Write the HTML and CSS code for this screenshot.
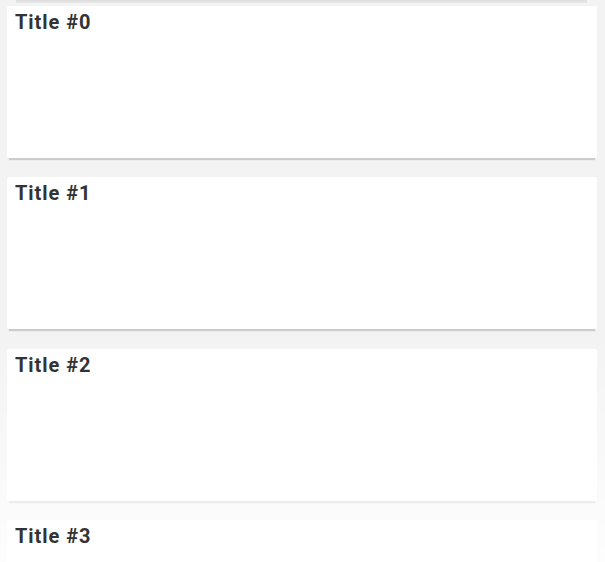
FILE: index.html
```html
<!DOCTYPE html>
<html>
<head>
<meta charset="utf-8">
<link rel="stylesheet" href="styles.css">
</head>
<body>
<div class="list">
  <div class="prev-shadow"></div>
  <div class="card"><div class="title">Title #0</div></div>
  <div class="card"><div class="title">Title #1</div></div>
  <div class="card"><div class="title">Title #2</div></div>
  <div class="card"><div class="title">Title #3</div></div>
  <div class="fade"></div>
</div>
</body>
</html>
```
FILE: styles.css
```css
html, body {
  margin: 0;
  padding: 0;
  width: 605px;
  height: 562px;
  overflow: hidden;
  background: #f3f3f3;
}
.list {
  position: relative;
  height: 562px;
  overflow: hidden;
  display: flex;
  flex-direction: column;
  gap: 19.4px;
  padding: 0 8px 0 7px;
  box-sizing: border-box;
}
.prev-shadow {
  height: 3px;
  margin: 0 10px -16.4px 9px;
  background: linear-gradient(#dcdcdc, #e8e8e8);
  flex: none;
}
.card {
  flex: none;
  height: 152px;
  background: #fff;
  border-radius: 2px;
  box-shadow: 0 4px 1px -2px rgba(0,0,0,0.16);
  padding: 4px 8px;
  box-sizing: border-box;
}
.title {
  position: relative;
  z-index: 2;
  font-family: Roboto, "Liberation Sans", sans-serif;
  font-weight: bold;
  font-size: 20px;
  letter-spacing: 0.95px;
  line-height: 24px;
  color: #333;
}
.fade {
  position: absolute;
  z-index: 1;
  left: 0;
  right: 0;
  bottom: 0;
  height: 230px;
  background: linear-gradient(rgba(255,255,255,0), rgba(255,255,255,0.85));
  pointer-events: none;
}
```
